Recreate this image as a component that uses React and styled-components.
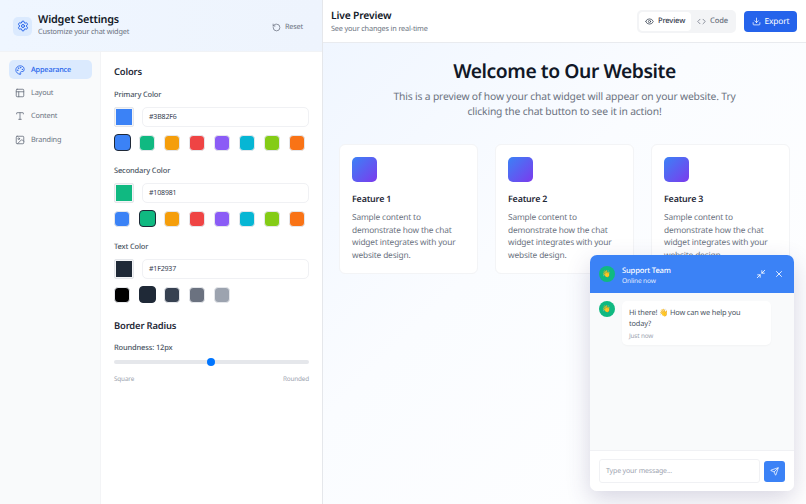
import styled, { createGlobalStyle } from "styled-components";
import {
  Settings, RotateCcw, Palette, Layout, Type, Image, Eye, Code, Download,
  Minimize2, X, Send,
} from "lucide-react";

const GlobalStyle = createGlobalStyle`
  * { box-sizing: border-box; }
  html, body { margin: 0; padding: 0; height: 100%; }
  body {
    font-family: "Noto Sans", "Open Sans", sans-serif;
    color: #1f2937;
    background: #fff;
    text-rendering: geometricPrecision;
    letter-spacing: -0.01em;
  }
`;

const Page = styled.div`
  display: flex;
  width: 806px;
  height: 504px;
  overflow: hidden;
`;

const Sidebar = styled.aside`
  width: 323px;
  flex: none;
  display: flex;
  flex-direction: column;
  border-right: 1px solid #e5e7eb;
`;

const SideHeader = styled.header`
  height: 52px;
  flex: none;
  display: flex;
  align-items: center;
  padding: 1px 19px 0 13px;
  background: linear-gradient(90deg, #eff6ff, #eef4fd);
  border-bottom: 1px solid #f1f3f6;
`;

const LogoBox = styled.div`
  width: 19px;
  height: 19px;
  border-radius: 5px;
  background: #dbeafe;
  color: #2563eb;
  display: flex;
  align-items: center;
  justify-content: center;
  margin-right: 6px;
`;

const TitleGroup = styled.div`
  flex: 1;
`;

const SideTitle = styled.div`
  font-size: 10.8px;
  line-height: 13px;
  font-weight: 600;
  color: #111827;
`;

const Sub = styled.div`
  font-size: 7.3px;
  line-height: 13px;
  color: #6b7280;
`;

const ResetButton = styled.div`
  display: flex;
  align-items: center;
  gap: 4px;
  padding-top: 2px;
  font-size: 7.3px;
  color: #6b7280;
`;

const SideBody = styled.div`
  flex: 1;
  display: flex;
  min-height: 0;
`;

const Nav = styled.nav`
  width: 101px;
  flex: none;
  padding: 8px 8px 0 9px;
  background: #f9fafb;
  border-right: 1px solid #f3f4f6;
  display: flex;
  flex-direction: column;
  gap: 4.4px;
`;

const NavItem = styled.div`
  height: 19px;
  border-radius: 5px;
  display: flex;
  align-items: center;
  gap: 6px;
  padding-left: 6px;
  font-size: 7.3px;
  font-weight: ${(p) => (p.$active ? 500 : 400)};
  color: ${(p) => (p.$active ? "#2563eb" : "#6b7280")};
  background: ${(p) => (p.$active ? "#dbeafe" : "transparent")};
`;

const Panel = styled.div`
  flex: 1;
  padding: 13px 13px 0 13px;
  background: #fff;
`;

const SectionTitle = styled.h3`
  margin: ${(p) => p.$top}px 0 ${(p) => p.$gap}px;
  font-size: 9.4px;
  line-height: 14px;
  font-weight: 600;
  color: #1f2937;
`;

const FieldLabel = styled.div`
  font-size: 7.5px;
  line-height: 12px;
  font-weight: 500;
  color: #4b5563;
  margin-bottom: 6px;
`;

const InputRow = styled.div`
  display: flex;
  gap: 8px;
  margin-bottom: 7px;
`;

const ColorWell = styled.div`
  width: 20px;
  height: 20px;
  flex: none;
  border: 1px solid #e5e7eb;
  padding: 1px;
  border-radius: 2px;
  background: #f3f4f6;
  & > div {
    width: 100%;
    height: 100%;
    background: ${(p) => p.$color};
  }
`;

const HexInput = styled.div`
  flex: 1;
  height: 20px;
  border: 1px solid #f0f1f4;
  border-radius: 5px;
  padding-left: 6px;
  display: flex;
  align-items: center;
  font-size: 7px;
  color: #374151;
`;

const SwatchRow = styled.div`
  display: flex;
  align-items: center;
  gap: 9px;
  height: 17px;
  margin-bottom: 14px;
`;

const Swatch = styled.div`
  width: ${(p) => (p.$selected ? 17 : 16)}px;
  height: ${(p) => (p.$selected ? 17 : 16)}px;
  margin-right: ${(p) => (p.$selected ? -1 : 0)}px;
  border-radius: 4px;
  background: ${(p) => p.$color};
  border: ${(p) => (p.$selected ? "1.5px solid #1f2937" : "1px solid #e5e7eb")};
`;

const SliderTrack = styled.div`
  position: relative;
  height: 4px;
  border-radius: 2px;
  background: #e5e7eb;
  margin: 1px 0 10px;
`;

const SliderThumb = styled.div`
  position: absolute;
  left: 93px;
  top: -2px;
  width: 8px;
  height: 8px;
  border-radius: 50%;
  background: #0075ff;
`;

const SliderEnds = styled.div`
  display: flex;
  justify-content: space-between;
  font-size: 6.4px;
  line-height: 10px;
  color: #9ca3af;
`;

const Main = styled.main`
  flex: 1;
  display: flex;
  flex-direction: column;
  min-width: 0;
  position: relative;
`;

const TopBar = styled.header`
  height: 43px;
  flex: none;
  display: flex;
  align-items: center;
  padding: 0 9px 0 8px;
  border-bottom: 1px solid #e9ebef;
  background: #fff;
`;

const LiveTitle = styled.div`
  margin-top: 3px;
  font-size: 10.3px;
  line-height: 13px;
  font-weight: 600;
  color: #111827;
`;

const Tabs = styled.div`
  display: flex;
  height: 23px;
  padding: 2px;
  background: #f3f4f6;
  border-radius: 5px;
  margin-right: 8px;
`;

const Tab = styled.div`
  display: flex;
  align-items: center;
  gap: 4px;
  padding: 0 6px;
  font-size: 7.6px;
  font-weight: 500;
  border-radius: 4px;
  color: ${(p) => (p.$active ? "#374151" : "#6b7280")};
  background: ${(p) => (p.$active ? "#fff" : "transparent")};
`;

const ExportButton = styled.div`
  width: 53px;
  height: 21px;
  border-radius: 4px;
  background: #2563eb;
  color: #fff;
  display: flex;
  align-items: center;
  justify-content: center;
  gap: 4px;
  font-size: 8.4px;
`;

const Canvas = styled.div`
  flex: 1;
  padding: 14px 16px 0;
  background: linear-gradient(135deg, #f0f6ff 0%, #fafcff 40%, #ffffff 100%);
`;

const Hero = styled.h1`
  margin: 0 0 6px;
  text-align: center;
  font-size: 19.3px;
  line-height: 27px;
  font-weight: 600;
  letter-spacing: -0.43px;
  color: #111827;
`;

const Lead = styled.p`
  margin: 0 auto 24px;
  width: 350px;
  text-align: center;
  font-size: 10.3px;
  line-height: 15px;
  color: #6b7280;
`;

const Cards = styled.div`
  display: grid;
  grid-template-columns: repeat(3, 1fr);
  gap: 17px;
`;

const Card = styled.div`
  height: 130px;
  padding: 12px;
  background: #fff;
  border: 1px solid #f3f4f6;
  border-radius: 6px;
`;

const CardIcon = styled.div`
  width: 25px;
  height: 25px;
  border-radius: 5px;
  background: linear-gradient(135deg, #3b82f6, #7c3aed);
  margin-bottom: 11px;
`;

const CardTitle = styled.div`
  font-size: 8.9px;
  line-height: 12px;
  font-weight: 600;
  color: #1f2937;
  margin-bottom: 7px;
`;

const CardText = styled.div`
  font-size: 8.35px;
  line-height: 12.6px;
  color: #6b7280;
`;

const ChatWindow = styled.div`
  position: absolute;
  left: 267px;
  top: 255px;
  width: 204px;
  height: 236px;
  border-radius: 7px;
  overflow: hidden;
  display: flex;
  flex-direction: column;
  background: #f9fafb;
  box-shadow: 0 8px 24px rgba(60, 50, 110, 0.2);
`;

const ChatHeader = styled.div`
  height: 38px;
  flex: none;
  background: #3b82f6;
  color: #fff;
  display: flex;
  align-items: center;
  gap: 7px;
  padding: 0 10px 0 9px;
`;

const Avatar = styled.div`
  width: 16px;
  height: 16px;
  flex: none;
  border-radius: 50%;
  background: #10b981;
  display: flex;
  align-items: center;
  justify-content: center;
  font-size: 7px;
`;

const ChatTitles = styled.div`
  padding-top: 3px;
`;

const ChatName = styled.div`
  font-size: 7.6px;
  line-height: 10px;
  font-weight: 500;
`;

const ChatStatus = styled.div`
  font-size: 6.6px;
  line-height: 10px;
  opacity: 0.85;
`;

const ChatActions = styled.div`
  margin-left: auto;
  display: flex;
  gap: 8px;
`;

const ChatBody = styled.div`
  flex: 1;
  display: flex;
  align-items: flex-start;
  gap: 7px;
  padding: 8px 9px;
`;

const Bubble = styled.div`
  width: 149px;
  height: 44px;
  padding: 7px 16px 6px 7px;
  background: #fff;
  border-radius: 5px;
  box-shadow: 0 1px 2px rgba(0, 0, 0, 0.03);
  font-size: 7.4px;
  line-height: 11px;
  color: #4b5563;
`;

const BubbleTime = styled.div`
  margin-top: 1px;
  font-size: 6.4px;
  line-height: 10px;
  color: #9ca3af;
`;

const ChatInputBar = styled.div`
  height: 41px;
  flex: none;
  display: flex;
  align-items: center;
  gap: 4px;
  padding: 0 9px;
  background: #fff;
  border-top: 1px solid #f0f1f4;
`;

const ChatInput = styled.div`
  flex: 1;
  height: 24px;
  border: 1px solid #f0f1f4;
  border-radius: 3px;
  padding-left: 6px;
  display: flex;
  align-items: center;
  font-size: 7px;
  color: #9ca3af;
`;

const SendButton = styled.div`
  width: 21px;
  height: 21px;
  border-radius: 3px;
  background: #3b82f6;
  color: #fff;
  display: flex;
  align-items: center;
  justify-content: center;
`;

const palette = ["#3B82F6", "#10B981", "#F59E0B", "#EF4444", "#8B5CF6", "#06B6D4", "#84CC16", "#F97316"];
const textPalette = ["#000000", "#1F2937", "#374151", "#6B7280", "#9CA3AF"];

const navItems = [
  { label: "Appearance", icon: Palette, active: true },
  { label: "Layout", icon: Layout },
  { label: "Content", icon: Type },
  { label: "Branding", icon: Image },
];

const fields = [
  { label: "Primary Color", value: "#3B82F6", color: "#3B82F6", colors: palette, selected: "#3B82F6" },
  { label: "Secondary Color", value: "#108981", color: "#10B981", colors: palette, selected: "#10B981" },
  { label: "Text Color", value: "#1F2937", color: "#1F2937", colors: textPalette, selected: "#1F2937" },
];

function ColorField({ label, value, color, colors, selected }) {
  return (
    <div>
      <FieldLabel>{label}</FieldLabel>
      <InputRow>
        <ColorWell $color={color}><div /></ColorWell>
        <HexInput>{value}</HexInput>
      </InputRow>
      <SwatchRow>
        {colors.map((c) => (
          <Swatch key={c} $color={c} $selected={c === selected} />
        ))}
      </SwatchRow>
    </div>
  );
}

export default function App() {
  return (
    <Page>
      <GlobalStyle />
      <Sidebar>
        <SideHeader>
          <LogoBox><Settings size={12} /></LogoBox>
          <TitleGroup>
            <SideTitle>Widget Settings</SideTitle>
            <Sub>Customize your chat widget</Sub>
          </TitleGroup>
          <ResetButton><RotateCcw size={9} />Reset</ResetButton>
        </SideHeader>
        <SideBody>
          <Nav>
            {navItems.map(({ label, icon: Icon, active }) => (
              <NavItem key={label} $active={active}>
                <Icon size={10} />
                {label}
              </NavItem>
            ))}
          </Nav>
          <Panel>
            <SectionTitle $top={0} $gap={10}>Colors</SectionTitle>
            {fields.map((f) => <ColorField key={f.label} {...f} />)}
            <SectionTitle $top={16} $gap={9}>Border Radius</SectionTitle>
            <FieldLabel>Roundness: 12px</FieldLabel>
            <SliderTrack><SliderThumb /></SliderTrack>
            <SliderEnds><span>Square</span><span>Rounded</span></SliderEnds>
          </Panel>
        </SideBody>
      </Sidebar>
      <Main>
        <TopBar>
          <TitleGroup>
            <LiveTitle>Live Preview</LiveTitle>
            <Sub>See your changes in real-time</Sub>
          </TitleGroup>
          <Tabs>
            <Tab $active><Eye size={9} />Preview</Tab>
            <Tab><Code size={9} />Code</Tab>
          </Tabs>
          <ExportButton><Download size={9} />Export</ExportButton>
        </TopBar>
        <Canvas>
          <Hero>Welcome to Our Website</Hero>
          <Lead>This is a preview of how your chat widget will appear on your website. Try clicking the chat button to see it in action!</Lead>
          <Cards>
            {[1, 2, 3].map((n) => (
              <Card key={n}>
                <CardIcon />
                <CardTitle>Feature {n}</CardTitle>
                <CardText>Sample content to demonstrate how the chat widget integrates with your website design.</CardText>
              </Card>
            ))}
          </Cards>
        </Canvas>
        <ChatWindow>
          <ChatHeader>
            <Avatar>👋</Avatar>
            <ChatTitles>
              <ChatName>Support Team</ChatName>
              <ChatStatus>Online now</ChatStatus>
            </ChatTitles>
            <ChatActions>
              <Minimize2 size={10} />
              <X size={10} />
            </ChatActions>
          </ChatHeader>
          <ChatBody>
            <Avatar>👋</Avatar>
            <Bubble>
              Hi there! 👋 How can we help you today?
              <BubbleTime>Just now</BubbleTime>
            </Bubble>
          </ChatBody>
          <ChatInputBar>
            <ChatInput>Type your message...</ChatInput>
            <SendButton><Send size={9} /></SendButton>
          </ChatInputBar>
        </ChatWindow>
      </Main>
    </Page>
  );
}
